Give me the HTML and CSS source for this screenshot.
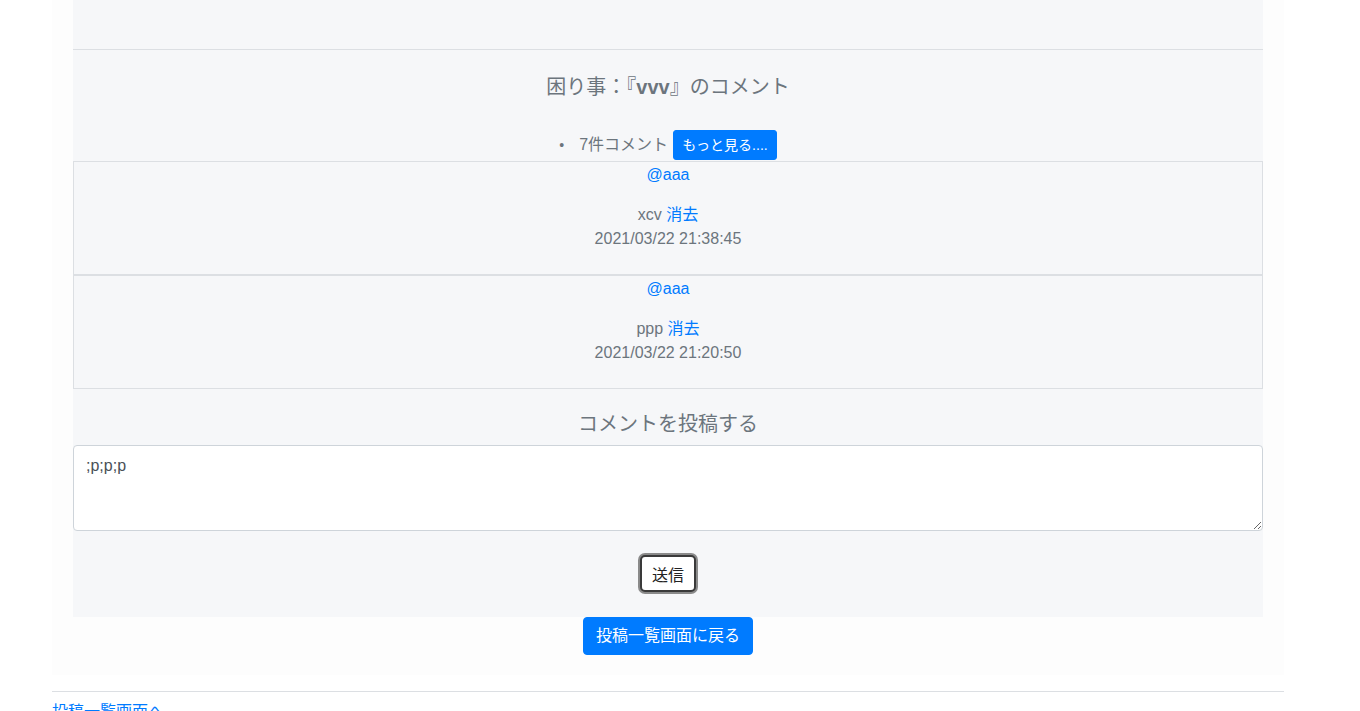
FILE: index.html
```html
<!DOCTYPE html>
<html lang="ja">
<head>
<meta charset="utf-8">
<title>コメント</title>
<link rel="stylesheet" href="styles.css">
</head>
<body>
<div class="page">
  <div class="outer">
    <div class="panel">
      <div class="top"></div>
      <h4 class="title">困り事：『<b>vvv</b>』のコメント</h4>
      <div class="count">
        <span class="bullet">•</span>
        <span class="count-text">7件コメント</span>
        <a class="btn btn-sm" href="#">もっと見る....</a>
      </div>
      <div class="comment">
        <p class="user"><a href="#">@aaa</a></p>
        <p class="body">xcv <a href="#">消去</a><br>2021/03/22 21:38:45</p>
      </div>
      <div class="comment">
        <p class="user"><a href="#">@aaa</a></p>
        <p class="body">ppp <a href="#">消去</a><br>2021/03/22 21:20:50</p>
      </div>
      <h4 class="post-title">コメントを投稿する</h4>
      <textarea class="input" rows="3">;p;p;p</textarea>
      <div class="send-row"><button class="send" type="button">送信</button></div>
    </div>
    <div class="back-row"><a class="btn btn-back" href="#">投稿一覧画面に戻る</a></div>
  </div>
  <hr class="rule">
  <a class="footer-link" href="#">投稿一覧画面へ</a>
</div>
</body>
</html>
```

FILE: styles.css
```css
html, body {
  margin: 0;
  padding: 0;
  background: #ffffff;
}
body {
  font-family: "Liberation Sans", "Noto Sans CJK JP", sans-serif;
  font-size: 16px;
  line-height: 24px;
  color: #6c757d;
}
a {
  color: #007bff;
  text-decoration: none;
}
.page {
  margin-left: 52px;
  width: 1232px;
}
.outer {
  background: #fdfdfd;
  padding: 0 21px 20px;
}
.panel {
  background: #f6f7f9;
  display: flex;
  flex-direction: column;
}
.top {
  height: 49px;
  border-bottom: 1px solid #dcdfe3;
}
.title {
  margin: 25px 0 31px;
  font-size: 20px;
  line-height: 24px;
  font-weight: 400;
  text-align: center;
  color: #6c757d;
}
.title b {
  font-weight: 700;
}
.count {
  display: flex;
  justify-content: center;
  align-items: center;
  height: 31px;
  padding-bottom: 1px;
  box-sizing: border-box;
}
.bullet {
  font-size: 14px;
  margin-right: 15px;
}
.count-text {
  margin-right: 5px;
}
.btn {
  display: inline-block;
  background: #007bff;
  color: #ffffff;
  border: 1px solid #007bff;
  border-radius: 3px;
}
.btn-sm {
  font-size: 14px;
  line-height: 20px;
  padding: 4px 8px;
}
.comment {
  border: 1px solid #dcdfe3;
  text-align: center;
  padding-top: 1px;
}
.comment p {
  margin: 0;
}
.comment .user {
  margin-bottom: 16px;
}
.comment .body {
  margin-bottom: 23px;
}
.post-title {
  margin: 23px 0 9px;
  font-size: 20px;
  line-height: 24px;
  font-weight: 400;
  text-align: center;
  color: #6c757d;
}
.input {
  display: block;
  box-sizing: border-box;
  width: 100%;
  height: 86px;
  margin: 0;
  padding: 8px 12px 4px;
  border: 1px solid #ced4da;
  border-radius: 4px;
  background: #ffffff;
  font-family: "Liberation Sans", "Noto Sans CJK JP", sans-serif;
  font-size: 16px;
  line-height: 24px;
  color: #495057;
  resize: vertical;
}
.send-row {
  display: flex;
  justify-content: center;
  padding: 24px 0 25px;
}
.send {
  box-sizing: border-box;
  width: 56px;
  height: 37px;
  padding: 0;
  font-family: "Liberation Sans", "Noto Sans CJK JP", sans-serif;
  font-size: 16px;
  color: #222222;
  background: #ffffff;
  border: 2px solid #3a3a3a;
  border-radius: 5px;
  box-shadow: 0 0 0 2px #8a8a8a;
}
.back-row {
  display: flex;
  justify-content: center;
}
.btn-back {
  font-size: 16px;
  line-height: 24px;
  padding: 6px 12px;
  border-radius: 4px;
}
.rule {
  margin: 16px 0 8px;
  border: 0;
  border-top: 1px solid #dcdfe3;
}
.footer-link {
  display: inline-block;
  font-size: 16px;
  line-height: 24px;
}
```
